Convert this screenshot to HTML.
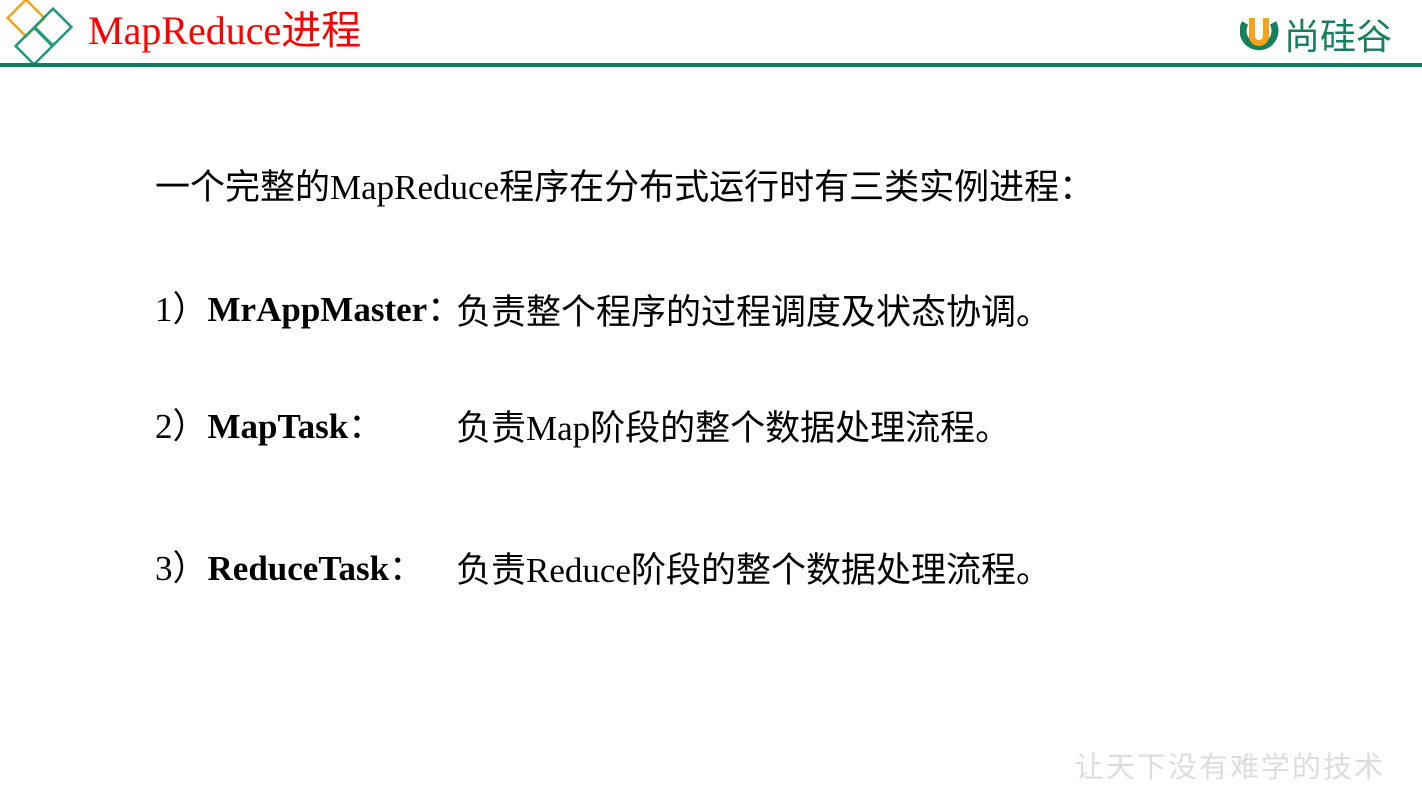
<!DOCTYPE html>
<html><head><meta charset="utf-8"><style>
body{margin:0;width:1422px;height:800px;background:#fff;position:relative;overflow:hidden;font-family:"Liberation Serif","Noto Sans CJK SC",serif;}
.t{position:absolute;white-space:nowrap;color:#000;font-size:35px;line-height:42px;}
.cn{font-family:"Noto Sans CJK SC",sans-serif;}
b{font-family:"Liberation Serif",serif;}
</style></head><body>
<svg style="position:absolute;left:0;top:0" width="80" height="68">
<rect x="13" y="5" width="26" height="26" transform="rotate(45 26 18)" fill="none" stroke="#f5a31a" stroke-width="2.5"/>
<rect x="40" y="14" width="26" height="26" transform="rotate(45 53 27)" fill="none" stroke="#1e9a7a" stroke-width="2.5"/>
<rect x="21" y="33" width="26" height="26" transform="rotate(45 34 46)" fill="none" stroke="#1e9a7a" stroke-width="2.5"/>
</svg>
<div class="t" style="left:88px;top:8px;color:#f00;font-size:40px;line-height:46px;font-family:'Liberation Serif','Noto Sans CJK SC',serif;">MapReduce进程</div>
<div style="position:absolute;left:0;top:63px;width:1422px;height:4px;background:#167a60"></div>
<svg style="position:absolute;left:1240px;top:14px" width="40" height="42">
<path d="M5 9 A16 16 0 1 0 33 9" fill="none" stroke="#16805e" stroke-width="7"/>
<path d="M12 4 V22 A7 7 0 0 0 26 22 V4" fill="none" stroke="#f5a31a" stroke-width="6"/>
</svg>
<div class="t cn" style="left:1284px;top:12px;font-size:36px;color:#16805e;line-height:44px;">尚硅谷</div>
<div class="t" style="left:155px;top:164px;"><span class="cn">一个完整的</span>MapReduce<span class="cn">程序在分布式运行时有三类实例进程：</span></div>
<div class="t" style="left:155px;top:286px;">1<span class="cn">）</span><b>MrAppMaster</b><span class="cn">：</span></div>
<div class="t cn" style="left:456px;top:289px;">负责整个程序的过程调度及状态协调。</div>
<div class="t" style="left:155px;top:403px;">2<span class="cn">）</span><b>MapTask</b><span class="cn">：</span></div>
<div class="t" style="left:456px;top:405px;"><span class="cn">负责</span>Map<span class="cn">阶段的整个数据处理流程。</span></div>
<div class="t" style="left:155px;top:545px;">3<span class="cn">）</span><b>ReduceTask</b><span class="cn">：</span></div>
<div class="t" style="left:456px;top:547px;"><span class="cn">负责</span>Reduce<span class="cn">阶段的整个数据处理流程。</span></div>
<div class="t cn" style="left:1075px;top:744px;font-size:29px;color:#ddd;letter-spacing:2px;">让天下没有难学的技术</div>
</body></html>
